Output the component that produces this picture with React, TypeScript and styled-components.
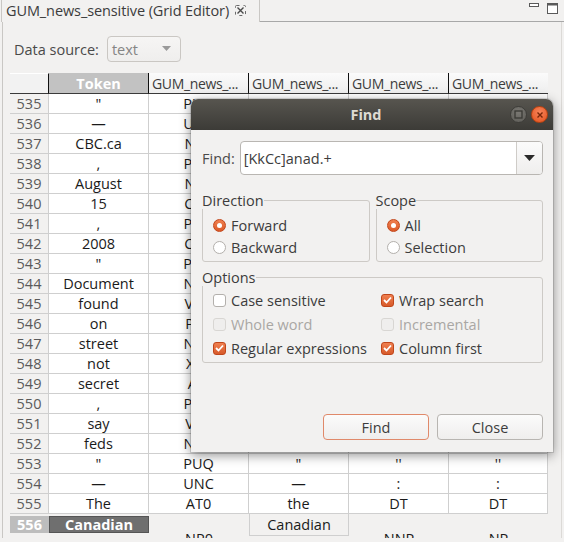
import React from "react";
import styled, { createGlobalStyle, css } from "styled-components";

const Global = createGlobalStyle`
  html, body { margin: 0; padding: 0; background: #f2f1f0; }
  body { font-family: "Open Sans", "Noto Sans", sans-serif; font-size: 14px; color: #3c3c3c; }
  * { box-sizing: border-box; }
`;

const Page = styled.div`
  position: relative;
  width: 564px;
  height: 542px;
  overflow: hidden;
  display: flex;
  flex-direction: column;
`;

const TabBar = styled.div`
  display: flex;
  align-items: stretch;
  height: 22px;
`;

const Tab = styled.div`
  display: flex;
  align-items: center;
  gap: 6px;
  width: 259px;
  margin-left: 1px;
  padding: 0 0 2px 4px;
  border-left: 1px solid #c9c7c4;
  border-right: 1px solid #c9c7c4;
  color: #3c3c3c;
  font-size: 14.5px;
  white-space: nowrap;
  letter-spacing: -0.1px;
`;

const TabRest = styled.div`
  flex: 1;
  display: flex;
  justify-content: flex-end;
  align-items: flex-start;
  gap: 8px;
  padding: 3px 6px 0 0;
  border-bottom: 1px solid #a8a8a8;
`;

const Panel = styled.div`
  flex: 1;
  margin: 0 2px 4px 2px;
  border-left: 1px solid #c9c7c4;
  border-right: 1px solid #dcdad7;
  display: flex;
  flex-direction: column;
  padding: 14px 0 0 7px;
  min-height: 0;
`;

const SourceRow = styled.div`
  display: flex;
  align-items: center;
  gap: 8px;
  padding-left: 4px;
  height: 26px;
`;

const Label = styled.span`
  color: #4a4a4a;
  font-size: 14.5px;
`;

const Combo = styled.div`
  width: 74px;
  height: 26px;
  border: 1px solid #cac7c3;
  border-radius: 4px;
  background: linear-gradient(#f6f5f4, #efeeed);
  display: flex;
  align-items: center;
  justify-content: space-between;
  padding: 0 9px 0 4px;
  color: #858585;
  font-size: 14.5px;
`;

const Grid = styled.div`
  margin-top: 11px;
  display: grid;
  grid-template-columns: 39px 100px 100px 100px 100px 99px;
  grid-template-rows: 21px;
  grid-auto-rows: 20px;
  align-content: start;
  flex: 1;
  overflow: hidden;
  min-height: 0;
`;

const HeadCell = styled.div<{ $kind?: "corner" | "token" | "normal" }>`
  height: 21px;
  border-right: 1px solid #111;
  border-bottom: 1px solid #3a3a3a;
  display: flex;
  align-items: center;
  justify-content: center;
  font-size: 14px;
  white-space: nowrap;
  overflow: hidden;
  ${(p) =>
    p.$kind === "token"
      ? css`
          background: #c2c2c2;
          color: #fff;
          font-weight: bold;
          font-size: 14.5px;
        `
      : p.$kind === "corner"
      ? css`
          background: #f2f2f2;
          border-top: 1px solid #fff;
        `
      : css`
          background: linear-gradient(#fbfbfb, #eeeeee);
          color: #3c3c3c;
          justify-content: flex-start;
          padding-left: 3px;
          letter-spacing: -0.35px;
        `}
`;

const HeadLast = styled(HeadCell)`
  border-right: none;
`;

const Cell = styled.div<{ $num?: boolean; $sel?: "num" | "tok"; $tall?: "top" | "low" }>`
  border-right: 1px solid #cfcfcf;
  border-bottom: 1px solid #cfcfcf;
  display: flex;
  align-items: center;
  justify-content: center;
  font-size: 14.5px;
  color: #1a1a1a;
  background: #fff;
  white-space: nowrap;
  overflow: hidden;
  ${(p) =>
    p.$num &&
    css`
      background: #f2f1f0;
      color: #5a5a5a;
    `}
  ${(p) =>
    p.$sel === "num" &&
    css`
      background: #bdbdbd;
      color: #fff;
      font-weight: bold;
      height: 17px;
      margin-top: 2px;
      border: none;
    `}
  ${(p) =>
    p.$sel === "tok" &&
    css`
      background: #6f6f6f;
      color: #fff;
      font-weight: bold;
      height: 17px;
      margin-top: 2px;
      border: 1px solid #555;
    `}
  ${(p) =>
    p.$tall === "low" &&
    css`
      background: transparent;
      border: none;
      align-items: flex-start;
      padding-top: 15px;
      height: 40px;
    `}
  ${(p) =>
    p.$tall === "top" &&
    css`
      background: transparent;
      border-left: 1px solid #cfcfcf;
      height: 22px;
    `}
`;

const Dialog = styled.div`
  position: absolute;
  left: 191px;
  top: 99px;
  width: 362px;
  height: 353px;
  background: #f2f1f0;
  border-radius: 7px 7px 0 0;
  box-shadow: 0 3px 12px rgba(0, 0, 0, 0.45), 0 0 0 1px rgba(0, 0, 0, 0.12);
  display: flex;
  flex-direction: column;
`;

const TitleBar = styled.div`
  height: 31px;
  border-radius: 7px 7px 0 0;
  background: linear-gradient(#57554f, #3c3b37);
  display: flex;
  align-items: center;
  justify-content: center;
  position: relative;
  padding-right: 12px;
  color: #dfdbd2;
  font-weight: bold;
  font-size: 14.5px;
`;

const TitleButtons = styled.div`
  position: absolute;
  right: 5px;
  top: 7px;
  display: flex;
  gap: 4px;
`;

const RoundBtn = styled.div<{ $close?: boolean }>`
  width: 17px;
  height: 17px;
  border-radius: 50%;
  display: flex;
  align-items: center;
  justify-content: center;
  background: ${(p) =>
    p.$close
      ? "radial-gradient(circle at 50% 35%, #f7845a, #e2521e)"
      : "radial-gradient(circle at 50% 35%, #7a7873, #5c5b56)"};
  border: 1px solid ${(p) => (p.$close ? "#b8410f" : "#3e3d39")};
`;

const Body = styled.div`
  flex: 1;
  display: flex;
  flex-direction: column;
  padding: 11px 10px 12px 11px;
`;

const FindRow = styled.div`
  display: flex;
  align-items: center;
  gap: 5px;
`;

const FindCombo = styled.div`
  flex: 1;
  height: 34px;
  border: 1px solid #b9b6b2;
  border-radius: 4px;
  background: #fff;
  display: flex;
  overflow: hidden;
`;

const FindText = styled.div`
  flex: 1;
  display: flex;
  align-items: center;
  padding-left: 3px;
  font-size: 14.5px;
  color: #3c3c3c;
`;

const DropBtn = styled.div`
  width: 26px;
  border-left: 1px solid #cfccc8;
  background: linear-gradient(#fbfbfb, #efeeed);
  display: flex;
  align-items: center;
  justify-content: center;
`;

const GroupRow = styled.div<{ $gap: number }>`
  display: flex;
  gap: 6px;
  margin-top: ${(p) => p.$gap}px;
`;

const Group = styled.fieldset<{ $h: number }>`
  flex: 1;
  margin: 0;
  padding: 0 0 0 10px;
  border: 1px solid #cdcac6;
  border-radius: 3px;
  height: ${(p) => p.$h}px;
  min-width: 0;
  display: flex;
  flex-direction: column;
`;

const Legend = styled.legend`
  padding: 0;
  margin-left: -11px;
  font-size: 14.5px;
  color: #3c3c3c;
  line-height: 17px;
`;

const RadioList = styled.div`
  display: flex;
  flex-direction: column;
  gap: 2px;
  margin-top: 6px;
`;

const Choice = styled.div<{ $disabled?: boolean }>`
  display: flex;
  align-items: center;
  gap: 5px;
  height: 20px;
  font-size: 14.5px;
  color: ${(p) => (p.$disabled ? "#a9a7a4" : "#3c3c3c")};
  white-space: nowrap;
`;

const Radio = styled.span<{ $on?: boolean }>`
  width: 13px;
  height: 13px;
  border-radius: 50%;
  display: inline-flex;
  align-items: center;
  justify-content: center;
  ${(p) =>
    p.$on
      ? css`
          background: linear-gradient(#f08050, #dc5a28);
          border: 1px solid #c2461a;
          &::after {
            content: "";
            width: 5px;
            height: 5px;
            border-radius: 50%;
            background: #fff;
          }
        `
      : css`
          background: #fff;
          border: 1px solid #b3b0ac;
        `}
`;

const Check = styled.span<{ $on?: boolean; $disabled?: boolean }>`
  width: 13px;
  height: 13px;
  border-radius: 3px;
  display: inline-flex;
  align-items: center;
  justify-content: center;
  ${(p) =>
    p.$on
      ? css`
          background: linear-gradient(#f08050, #d75a2a);
          border: 1px solid #c0461a;
        `
      : p.$disabled
      ? css`
          background: #efeeed;
          border: 1px solid #d8d6d3;
        `
      : css`
          background: #fff;
          border: 1px solid #b3b0ac;
        `}
`;

const OptionsGrid = styled.div`
  display: grid;
  grid-template-columns: 168px 1fr;
  row-gap: 4px;
  margin-top: 4px;
`;

const ButtonRow = styled.div`
  margin-top: auto;
  display: flex;
  justify-content: flex-end;
  gap: 8px;
`;

const Button = styled.div<{ $default?: boolean }>`
  width: 106px;
  height: 26px;
  border-radius: 4px;
  border: 1px solid ${(p) => (p.$default ? "#e0896a" : "#b8b5b1")};
  background: linear-gradient(#fbfbfb, #efeeed);
  display: flex;
  align-items: center;
  justify-content: center;
  font-size: 14.5px;
  color: #3c3c3c;
`;

type Row = [string, string, string, string, string, string];

const rows: Row[] = [
  ["535", "\"", "PUQ", "\"", "''", "''"],
  ["536", "\u2014", "UNC", "\u2014", ":", ":"],
  ["537", "CBC.ca", "NP0", "CBC.ca", "NNP", "NP"],
  ["538", ",", "PUN", ",", ",", ","],
  ["539", "August", "NP0", "August", "NNP", "NP"],
  ["540", "15", "CRD", "15", "CD", "CD"],
  ["541", ",", "PUN", ",", ",", ","],
  ["542", "2008", "CRD", "2008", "CD", "CD"],
  ["543", "\"", "PUQ", "\"", "''", "''"],
  ["544", "Document", "NN1", "document", "NN", "NN"],
  ["545", "found", "VVN", "find", "VBN", "VVN"],
  ["546", "on", "PRP", "on", "IN", "IN"],
  ["547", "street", "NN1", "street", "NN", "NN"],
  ["548", "not", "XX0", "not", "RB", "RB"],
  ["549", "secret", "AJ0", "secret", "JJ", "JJ"],
  ["550", ",", "PUN", ",", ",", ","],
  ["551", "say", "VVB", "say", "VBP", "VVP"],
  ["552", "feds", "NN2", "fed", "NNS", "NNS"],
  ["553", "\"", "PUQ", "\"", "''", "''"],
  ["554", "\u2014", "UNC", "\u2014", ":", ":"],
  ["555", "The", "AT0", "the", "DT", "DT"],
];

const Arrow = ({ color = "#3c3c3c", w = 10 }: { color?: string; w?: number }) => (
  <svg width={w} height={w / 2 + 1} viewBox="0 0 10 6">
    <path d="M0 0 L10 0 L5 5.5 Z" fill={color} />
  </svg>
);

function CheckMark() {
  return (
    <svg width="9" height="8" viewBox="0 0 9 8">
      <path d="M1 4 L3.5 6.5 L8 1.5" fill="none" stroke="#fff" strokeWidth="1.8" />
    </svg>
  );
}

export default function App() {
  return (
    <Page>
      <Global />
      <TabBar>
        <Tab>
          GUM_news_sensitive (Grid Editor)
          <svg width="11" height="11" viewBox="0 0 11 11">
            <rect x="0.5" y="0.5" width="10" height="10" rx="1" fill="none" stroke="#6a6a6a" strokeWidth="1" strokeDasharray="3 4" />
            <path d="M2.5 2.5 L8.5 8.5 M8.5 2.5 L2.5 8.5" stroke="#4a4a4a" strokeWidth="1.4" />
          </svg>
        </Tab>
        <TabRest>
          <svg width="10" height="5" viewBox="0 0 10 5">
            <rect x="0.5" y="0.5" width="9" height="3" fill="#fff" stroke="#5a5a5a" />
          </svg>
          <svg width="11" height="11" viewBox="0 0 11 11">
            <rect x="0.5" y="0.5" width="10" height="10" fill="#fff" stroke="#5a5a5a" />
            <rect x="0.5" y="0.5" width="10" height="2" fill="#5a5a5a" />
          </svg>
        </TabRest>
      </TabBar>
      <Panel>
        <SourceRow>
          <Label>Data source:</Label>
          <Combo>
            text
            <Arrow color="#9a9a9a" w={9} />
          </Combo>
        </SourceRow>
        <Grid>
          <HeadCell $kind="corner" />
          <HeadCell $kind="token">Token</HeadCell>
          <HeadCell>GUM_news_...</HeadCell>
          <HeadCell>GUM_news_...</HeadCell>
          <HeadCell>GUM_news_...</HeadCell>
          <HeadLast>GUM_news_...</HeadLast>
          {rows.map((r) => (
            <React.Fragment key={r[0]}>
              <Cell $num>{r[0]}</Cell>
              <Cell>{r[1]}</Cell>
              <Cell>{r[2]}</Cell>
              <Cell>{r[3]}</Cell>
              <Cell>{r[4]}</Cell>
              <Cell>{r[5]}</Cell>
            </React.Fragment>
          ))}
          <Cell $num $sel="num">556</Cell>
          <Cell $sel="tok">Canadian</Cell>
          <Cell $tall="low">NP0</Cell>
          <Cell $tall="top">Canadian</Cell>
          <Cell $tall="low">NNP</Cell>
          <Cell $tall="low">NP</Cell>
        </Grid>
      </Panel>

      <Dialog>
        <TitleBar>
          Find
          <TitleButtons>
            <RoundBtn>
              <svg width="9" height="9" viewBox="0 0 9 9">
                <rect x="1" y="1" width="7" height="7" fill="none" stroke="#3a3935" strokeWidth="1.3" />
              </svg>
            </RoundBtn>
            <RoundBtn $close>
              <svg width="8" height="8" viewBox="0 0 8 8">
                <path d="M1.5 1.5 L6.5 6.5 M6.5 1.5 L1.5 6.5" stroke="#7a2608" strokeWidth="1.4" />
              </svg>
            </RoundBtn>
          </TitleButtons>
        </TitleBar>
        <Body>
          <FindRow>
            <Label>Find:</Label>
            <FindCombo>
              <FindText>[KkCc]anad.+</FindText>
              <DropBtn>
                <Arrow color="#2a2a2a" w={11} />
              </DropBtn>
            </FindCombo>
          </FindRow>
          <GroupRow $gap={17}>
            <Group $h={70}>
              <Legend>Direction</Legend>
              <RadioList>
                <Choice>
                  <Radio $on />
                  Forward
                </Choice>
                <Choice>
                  <Radio />
                  Backward
                </Choice>
              </RadioList>
            </Group>
            <Group $h={70}>
              <Legend>Scope</Legend>
              <RadioList>
                <Choice>
                  <Radio $on />
                  All
                </Choice>
                <Choice>
                  <Radio />
                  Selection
                </Choice>
              </RadioList>
            </Group>
          </GroupRow>
          <GroupRow $gap={7}>
            <Group $h={94}>
              <Legend>Options</Legend>
              <OptionsGrid>
                <Choice>
                  <Check />
                  Case sensitive
                </Choice>
                <Choice>
                  <Check $on>
                    <CheckMark />
                  </Check>
                  Wrap search
                </Choice>
                <Choice $disabled>
                  <Check $disabled />
                  Whole word
                </Choice>
                <Choice $disabled>
                  <Check $disabled />
                  Incremental
                </Choice>
                <Choice>
                  <Check $on>
                    <CheckMark />
                  </Check>
                  Regular expressions
                </Choice>
                <Choice>
                  <Check $on>
                    <CheckMark />
                  </Check>
                  Column first
                </Choice>
              </OptionsGrid>
            </Group>
          </GroupRow>
          <ButtonRow>
            <Button $default>Find</Button>
            <Button>Close</Button>
          </ButtonRow>
        </Body>
      </Dialog>
    </Page>
  );
}
